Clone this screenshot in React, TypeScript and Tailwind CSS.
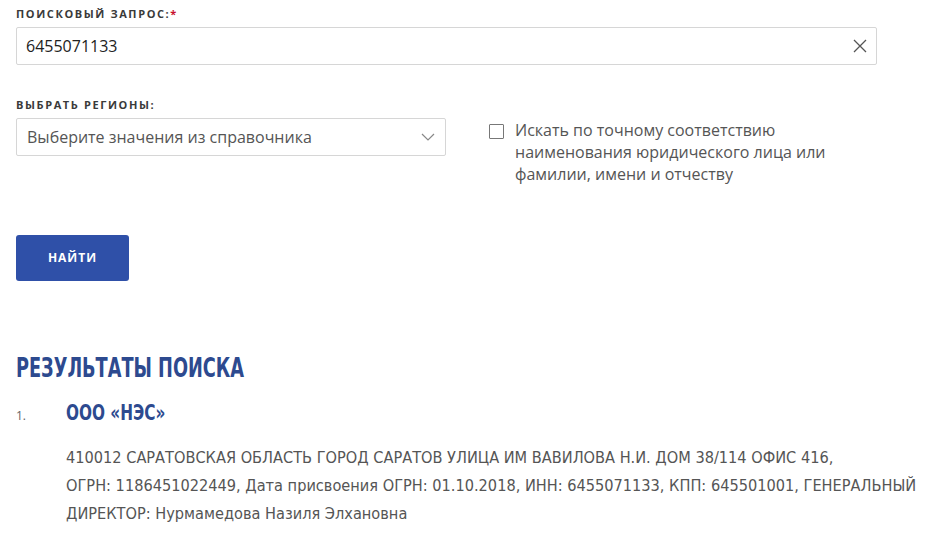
import React from "react";

const sans = { fontFamily: '"Open Sans", "Noto Sans", sans-serif' };
const cond = { fontFamily: '"DejaVu Sans Condensed", "DejaVu Sans", sans-serif', fontStretch: "condensed" as const };

export default function App() {
  return (
    <div className="w-[929px] h-[551px] bg-white overflow-hidden text-[#333]" style={sans}>
      <div className="pl-[16px] pr-[52px] pt-[7px]">
        <div className="text-[11px] font-bold tracking-[1.6px] leading-[14px] text-[#3a3a3a]">
          ПОИСКОВЫЙ ЗАПРОС:<span className="text-[#c8102e]">*</span>
        </div>
        <div className="mt-[6px] h-[38px] border border-[#d6d6d6] rounded-[2px] flex items-center pl-[9px] pr-[9px]">
          <span className="flex-1 text-[16px] text-[#222]">6455071133</span>
          <svg width="14" height="14" viewBox="0 0 14 14" className="text-[#555]">
            <path d="M1 1L13 13M13 1L1 13" stroke="currentColor" strokeWidth="1.3" />
          </svg>
        </div>

        <div className="mt-[33px] text-[11px] font-bold tracking-[1.6px] leading-[14px] text-[#3a3a3a]">
          ВЫБРАТЬ РЕГИОНЫ:
        </div>
        <div className="mt-[6px] flex items-start">
          <div className="w-[430px] h-[38px] border border-[#d6d6d6] rounded-[2px] flex items-center pl-[10px] pr-[10px]">
            <span className="flex-1 text-[16px] text-[#555]">Выберите значения из справочника</span>
            <svg width="14" height="8" viewBox="0 0 14 8" className="text-[#888]">
              <path d="M1 1L7 7L13 1" stroke="currentColor" strokeWidth="1.2" fill="none" />
            </svg>
          </div>
          <label className="ml-[43px] mt-[1px] flex items-start">
            <span className="mt-[5px] w-[15px] h-[15px] border border-[#777] rounded-[1px] bg-white shrink-0"></span>
            <span className="ml-[11px] w-[350px] text-[16px] leading-[22px] text-[#555]">
              Искать по точному соответствию наименования юридического лица или фамилии, имени и отчеству
            </span>
          </label>
        </div>

        <button className="mt-[50px] w-[113px] h-[46px] bg-[#2f50a8] rounded-[3px] text-white text-[12px] font-bold tracking-[1px]">
          НАЙТИ
        </button>

        <h2
          className="mt-[72px] text-[27px] leading-[30px] font-bold text-[#2d4a8f] scale-x-[0.73] origin-left whitespace-nowrap"
          style={cond}
        >
          РЕЗУЛЬТАТЫ ПОИСКА
        </h2>

        <div className="mt-[18px] flex items-start">
          <span className="w-[50px] shrink-0 text-[12px] text-[#666] mt-[6px]">1.</span>
          <div>
            <div
              className="text-[21px] leading-[24px] font-bold text-[#2d4a8f] scale-x-[0.81] origin-left whitespace-nowrap"
              style={cond}
            >
              ООО «НЭС»
            </div>
            <div
              className="mt-[19px] text-[16.2px] leading-[28px] text-[#555] whitespace-nowrap"
              style={cond}
            >
              410012 САРАТОВСКАЯ ОБЛАСТЬ ГОРОД САРАТОВ УЛИЦА ИМ ВАВИЛОВА Н.И. ДОМ 38/114 ОФИС 416,
              <br />
              ОГРН: 1186451022449, Дата присвоения ОГРН: 01.10.2018, ИНН: 6455071133, КПП: 645501001, ГЕНЕРАЛЬНЫЙ
              <br />
              ДИРЕКТОР: Нурмамедова Назиля Элхановна
            </div>
          </div>
        </div>
      </div>
    </div>
  );
}
